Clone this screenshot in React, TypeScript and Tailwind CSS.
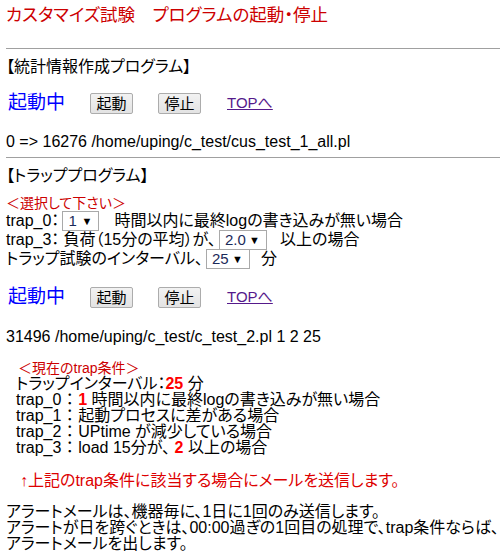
import React from "react";

const font = "font-['Liberation_Sans','Noto_Sans_CJK_JP',sans-serif] [font-feature-settings:'palt']";

function Btn({ label }: { label: string }) {
  return (
    <button
      type="button"
      className="h-[21px] w-[43px] rounded-[2px] border border-[#acacac] bg-gradient-to-b from-[#f2f2f2] to-[#e3e3e3] text-[15px] leading-[19px] text-black"
    >
      {label}
    </button>
  );
}

function Sel({ value, width }: { value: string; width: string }) {
  return (
    <span
      className={`inline-flex h-[20px] ${width} items-center justify-between border border-[#a9a9a9] bg-white pl-[5px] pr-[6px] text-[15px] leading-[18px] text-[#1b2a5a]`}
    >
      <span>{value}</span>
      <span className="text-[11px] text-black">▼</span>
    </span>
  );
}

function StatusRow() {
  return (
    <div className="flex h-[22px] items-center">
      <span className="ml-[2px] w-[82px] text-[19px] leading-[22px] text-[#0000ff]">起動中</span>
      <Btn label="起動" />
      <span className="w-[25px]" />
      <Btn label="停止" />
      <a href="#" className="ml-[26px] text-[15px] leading-[20px] text-[#551a8b] underline">
        TOPへ
      </a>
    </div>
  );
}

export default function App() {
  return (
    <div className={`${font} w-[500px] bg-white pt-[4px] text-black`}>
      <div className="pl-[6px]">
        <div className="h-[22px] text-[17.5px] leading-[22px] text-[#cc0000]">
          カスタマイズ試験　プログラムの起動・停止
        </div>
      </div>

      <div className="ml-[6px] mt-[22px] h-px bg-[#a0a0a0]" />

      <div className="pl-[6px] text-[16px]">
        <div className="mt-[10px] h-[16px] leading-[16px]">【統計情報作成プログラム】</div>
        <div className="mt-[17px]">
          <StatusRow />
        </div>
        <div className="mt-[20px] h-[16px] leading-[16px]">0 =&gt; 16276 /home/uping/c_test/cus_test_1_all.pl</div>
      </div>

      <div className="ml-[6px] mt-[7px] h-px bg-[#a0a0a0]" />

      <div className="pl-[6px] text-[16px]">
        <div className="mt-[10px] h-[16px] leading-[16px]">【トラッププログラム】</div>
        <div className="mt-[11px] h-[16px] text-[14px] leading-[16px] text-[#cc0000]">＜選択して下さい＞</div>
        <div className="flex h-[19px] items-center gap-[3px]">
          <span>trap_0：</span>
          <Sel value="1" width="w-[37px]" />
          <span className="ml-[12px]">時間以内に最終logの書き込みが無い場合</span>
        </div>
        <div className="flex h-[19px] items-center gap-[3px]">
          <span>
            trap_3：<span className="ml-[4px]">負荷（15分の平均）が、</span>
          </span>
          <Sel value="2.0" width="w-[48px]" />
          <span className="ml-[10px]">以上の場合</span>
        </div>
        <div className="flex h-[19px] items-center gap-[3px]">
          <span>トラップ試験のインターバル、</span>
          <Sel value="25" width="w-[44px]" />
          <span className="ml-[8px]">分</span>
        </div>

        <div className="mt-[18px]">
          <StatusRow />
        </div>
        <div className="mt-[21px] h-[16px] leading-[16px]">31496 /home/uping/c_test/c_test_2.pl 1 2 25</div>

        <div className="mt-[15px] pl-[10px]">
          <div className="ml-[2px] h-[16px] text-[14px] leading-[16px] text-[#cc0000]">＜現在のtrap条件＞</div>
          <div className="h-[16px] leading-[16px]">
            トラップインターバル：<b className="text-[#ff0000]">25</b> 分
          </div>
          <div className="h-[16px] leading-[16px]">
            trap_0 ： <b className="text-[#ff0000]">1</b> 時間以内に最終logの書き込みが無い場合
          </div>
          <div className="h-[16px] leading-[16px]">trap_1 ： 起動プロセスに差がある場合</div>
          <div className="h-[16px] leading-[16px]">trap_2 ： UPtime が減少している場合</div>
          <div className="h-[16px] leading-[16px]">
            trap_3 ： load 15分が、 <b className="text-[#ff0000]">2</b> 以上の場合
          </div>
          <div className="ml-[4px] mt-[17px] h-[16px] leading-[16px] text-[#dd0000]">
            ↑上記のtrap条件に該当する場合にメールを送信します。
          </div>
        </div>

        <div className="mt-[15px] leading-[16px]">
          <div className="h-[16px]">アラートメールは、機器毎に、1日に1回のみ送信します。</div>
          <div className="h-[16px] whitespace-nowrap">アラートが日を跨ぐときは、00:00過ぎの1回目の処理で、trap条件ならば、</div>
          <div className="h-[16px]">アラートメールを出します。</div>
        </div>
      </div>
    </div>
  );
}
